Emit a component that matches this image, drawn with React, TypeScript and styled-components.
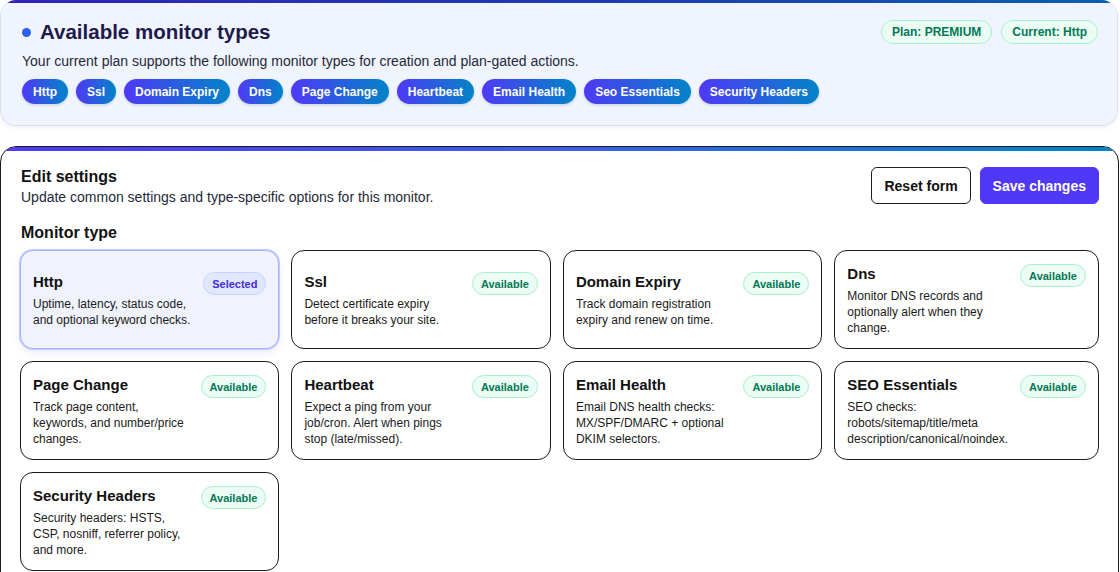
import React from "react";
import styled, { createGlobalStyle } from "styled-components";

const Global = createGlobalStyle`
  html, body { margin: 0; padding: 0; background: #ffffff; }
  body { font-family: "Liberation Sans", Arial, sans-serif; color: #111111; }
  * { box-sizing: border-box; }
`;

const Page = styled.div`
  display: flex;
  flex-direction: column;
  gap: 20px;
  width: 1119px;
`;

const PlanPanel = styled.section`
  overflow: hidden;
  width: 1118px;
  background: #eff4fe;
  border: 1px solid #dbe2ef;
  border-top: none;
  border-radius: 16px;
  box-shadow: 0 2px 4px rgba(30, 41, 59, 0.06);
`;

const TopBar = styled.div<{ $dark?: boolean }>`
  height: ${(p) => (p.$dark ? "3px" : "4px")};
  background: ${(p) =>
    p.$dark
      ? "linear-gradient(90deg, #2f23b8, #1d3fae 60%, #0b5fb0)"
      : "linear-gradient(90deg, #4f39f6, #3d5ee8 50%, #0284c7)"};
`;

const PlanBody = styled.div`
  padding: 17px 19px 21px 20px;
  display: flex;
  flex-direction: column;
`;

const PlanHeader = styled.div`
  display: flex;
  align-items: center;
  justify-content: space-between;
  height: 24px;
`;

const TitleWrap = styled.div`
  display: flex;
  align-items: center;
  gap: 9px;
`;

const Dot = styled.span`
  width: 9px;
  height: 9px;
  border-radius: 50%;
  background: linear-gradient(135deg, #3b5bf0, #2563eb);
  margin-left: 1px;
`;

const PlanTitle = styled.h1`
  margin: 0;
  font-size: 20.5px;
  font-weight: 800;
  color: #1e1b4b;
  line-height: 24px;
`;

const BadgeRow = styled.div`
  display: flex;
  gap: 9px;
`;

const GreenTag = styled.span<{ $size?: "sm" | "md" }>`
  display: inline-flex;
  align-items: center;
  height: ${(p) => (p.$size === "sm" ? "23px" : "24px")};
  padding: 0 ${(p) => (p.$size === "sm" ? "8px" : "10px")};
  border-radius: 999px;
  border: 1px solid #a7f0cc;
  background: #ebfdf4;
  color: #047857;
  font-size: ${(p) => (p.$size === "sm" ? "11px" : "12px")};
  font-weight: 700;
  white-space: nowrap;
  flex-shrink: 0;
`;

const PlanText = styled.p`
  margin: 7px 0 0 1px;
  font-size: 14px;
  line-height: 20px;
  color: #1f2937;
`;

const PillRow = styled.div`
  display: flex;
  flex-wrap: wrap;
  gap: 8px;
  margin-top: 8px;
  margin-left: 1px;
`;

const TypePill = styled.span`
  display: inline-flex;
  align-items: center;
  height: 25px;
  padding: 0 11px;
  border-radius: 999px;
  background: linear-gradient(90deg, #4f39f6, #0284c7);
  color: #ffffff;
  font-size: 12px;
  font-weight: 700;
  box-shadow: 0 1px 3px rgba(15, 23, 42, 0.18);
`;

const EditPanel = styled.section`
  overflow: hidden;
  width: 1119px;
  border: 1px solid #1a1a1a;
  border-radius: 16px;
  background: #ffffff;
`;

const EditBody = styled.div`
  padding: 16px 19px 20px 19px;
`;

const EditHeader = styled.div`
  display: flex;
  justify-content: space-between;
  align-items: flex-start;
`;

const HeadBlock = styled.div`
  padding-left: 1px;
`;

const SectionTitle = styled.h2`
  margin: 0;
  font-size: 16px;
  line-height: 20px;
  font-weight: 700;
  color: #111111;
`;

const SectionText = styled.p`
  margin: 0;
  font-size: 14px;
  line-height: 20px;
  color: #1f2937;
`;

const Actions = styled.div`
  display: flex;
  gap: 9px;
`;

const Button = styled.button<{ $primary?: boolean }>`
  height: 37px;
  padding: 0 12px;
  border-radius: 6px;
  border: 1px solid ${(p) => (p.$primary ? "#4f39f6" : "#1f1f1f")};
  background: ${(p) => (p.$primary ? "#4f39f6" : "#ffffff")};
  color: ${(p) => (p.$primary ? "#ffffff" : "#111111")};
  font-family: "Liberation Sans", Arial, sans-serif;
  font-size: 14px;
  font-weight: 700;
  cursor: pointer;
`;

const TypeLabel = styled(SectionTitle)`
  margin: 16px 0 7px 1px;
`;

const Grid = styled.div`
  display: grid;
  grid-template-columns: repeat(4, 1fr);
  gap: 12px;
`;

const Card = styled.div<{ $selected?: boolean }>`
  display: flex;
  flex-direction: column;
  justify-content: center;
  min-height: 99px;
  padding: 13px 12px 12px;
  border-radius: 13px;
  border: 1px solid ${(p) => (p.$selected ? "#a3b3ff" : "#1c1c1c")};
  background: ${(p) => (p.$selected ? "#f0f3fe" : "#ffffff")};
  box-shadow: ${(p) =>
    p.$selected ? "0 0 0 1px #c3cdfd, 0 3px 8px rgba(79, 57, 246, 0.12)" : "none"};
`;

const CardInner = styled.div`
  display: flex;
  align-items: flex-start;
  gap: 12px;
`;

const CardText = styled.div`
  flex: 1;
  min-width: 0;
`;

const CardTitle = styled.div`
  font-size: 15px;
  line-height: 20px;
  font-weight: 700;
  color: #111111;
`;

const CardDesc = styled.div`
  margin-top: 4px;
  font-size: 12px;
  line-height: 16px;
  color: #1a1a1a;
`;

const SelectedTag = styled.span`
  display: inline-flex;
  align-items: center;
  height: 23px;
  padding: 0 8px;
  border-radius: 999px;
  border: 1px solid #c6d2ff;
  background: #e0e7ff;
  color: #432dd7;
  font-size: 11px;
  font-weight: 700;
  flex-shrink: 0;
`;

const pills = [
  "Http",
  "Ssl",
  "Domain Expiry",
  "Dns",
  "Page Change",
  "Heartbeat",
  "Email Health",
  "Seo Essentials",
  "Security Headers",
];

const types = [
  { title: "Http", desc: "Uptime, latency, status code, and optional keyword checks.", selected: true },
  { title: "Ssl", desc: "Detect certificate expiry before it breaks your site." },
  { title: "Domain Expiry", desc: "Track domain registration expiry and renew on time." },
  { title: "Dns", desc: "Monitor DNS records and optionally alert when they change." },
  { title: "Page Change", desc: "Track page content, keywords, and number/price changes." },
  { title: "Heartbeat", desc: "Expect a ping from your job/cron. Alert when pings stop (late/missed)." },
  { title: "Email Health", desc: "Email DNS health checks: MX/SPF/DMARC + optional DKIM selectors." },
  { title: "SEO Essentials", desc: "SEO checks: robots/sitemap/title/meta description/canonical/noindex." },
  { title: "Security Headers", desc: "Security headers: HSTS, CSP, nosniff, referrer policy, and more." },
];

export default function App() {
  return (
    <>
      <Global />
      <Page>
        <PlanPanel>
          <TopBar $dark />
          <PlanBody>
            <PlanHeader>
              <TitleWrap>
                <Dot />
                <PlanTitle>Available monitor types</PlanTitle>
              </TitleWrap>
              <BadgeRow>
                <GreenTag>Plan: PREMIUM</GreenTag>
                <GreenTag>Current: Http</GreenTag>
              </BadgeRow>
            </PlanHeader>
            <PlanText>
              Your current plan supports the following monitor types for creation and plan-gated actions.
            </PlanText>
            <PillRow>
              {pills.map((p) => (
                <TypePill key={p}>{p}</TypePill>
              ))}
            </PillRow>
          </PlanBody>
        </PlanPanel>

        <EditPanel>
          <TopBar />
          <EditBody>
            <EditHeader>
              <HeadBlock>
                <SectionTitle>Edit settings</SectionTitle>
                <SectionText>Update common settings and type-specific options for this monitor.</SectionText>
              </HeadBlock>
              <Actions>
                <Button>Reset form</Button>
                <Button $primary>Save changes</Button>
              </Actions>
            </EditHeader>
            <TypeLabel>Monitor type</TypeLabel>
            <Grid>
              {types.map((t) => (
                <Card key={t.title} $selected={t.selected}>
                  <CardInner>
                    <CardText>
                      <CardTitle>{t.title}</CardTitle>
                      <CardDesc>{t.desc}</CardDesc>
                    </CardText>
                    {t.selected ? (
                      <SelectedTag>Selected</SelectedTag>
                    ) : (
                      <GreenTag $size="sm">Available</GreenTag>
                    )}
                  </CardInner>
                </Card>
              ))}
            </Grid>
          </EditBody>
        </EditPanel>
      </Page>
    </>
  );
}
